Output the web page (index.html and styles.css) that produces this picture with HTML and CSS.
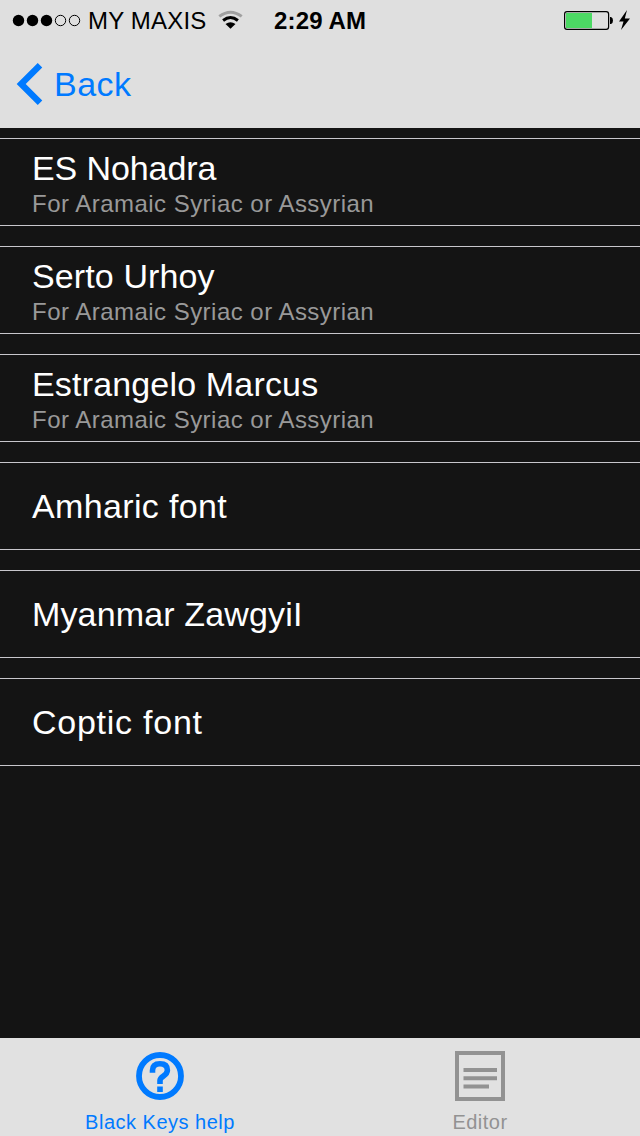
FILE: index.html
```
<!DOCTYPE html>
<html lang="en">
<head>
<meta charset="utf-8">
<title>Black Keys help</title>
<link rel="stylesheet" href="styles.css">
</head>
<body>
<div class="screen">
  <header class="header">
    <div class="status">
      <div class="carrier">
        <svg class="signal" width="70" height="14" viewBox="0 0 70 14">
          <circle cx="6.5" cy="7.5" r="5.7"/><circle cx="20.5" cy="7.5" r="5.7"/><circle cx="34.5" cy="7.5" r="5.7"/>
          <g fill="none" stroke="#000"><circle cx="48.5" cy="7.5" r="5.2"/><circle cx="62.5" cy="7.5" r="5.2"/></g>
        </svg>
        <span class="carrier-name">MY MAXIS</span>
        <svg class="wifi" width="26" height="20" viewBox="0 0 26 20">
          <path d="M1.3 6.4Q12.5 -2 23.7 6.4" fill="none" stroke="#a0a0a0" stroke-width="3"/>
          <path d="M5.1 10.5Q12.5 4.6 19.9 10.5" fill="none" stroke="#000" stroke-width="3"/>
          <path d="M7.5 14Q12.5 10.6 17.5 14L12.5 18.8Z"/>
        </svg>
      </div>
      <time class="time">2:29 AM</time>
      <svg class="battery" width="68" height="24" viewBox="0 0 68 24">
        <rect x=".6" y="3.6" width="44" height="17.8" rx="2.4" fill="none" stroke="#000" stroke-width="1.2"/>
        <rect x="2" y="5" width="26" height="15" fill="#4cd964"/>
        <path d="M46 9h1q2 .6 2 3.5t-2 3.5h-1z"/>
        <path d="M63 2L55 13.5h4.5L57 22L66 10.5h-5.2z"/>
      </svg>
    </div>
    <nav class="nav">
      <a class="back">
        <svg width="28" height="44" viewBox="0 0 28 44"><path d="M25 3.2L6.2 22L25 40.8" fill="none" stroke="#007aff" stroke-width="6.4"/></svg>
        <span class="back-label">Back</span>
      </a>
    </nav>
  </header>
  <main class="list">
    <div class="row"><div class="title t-nohadra">ES Nohadra</div><div class="subtitle">For Aramaic Syriac or Assyrian</div></div>
    <div class="row"><div class="title t-serto">Serto Urhoy</div><div class="subtitle">For Aramaic Syriac or Assyrian</div></div>
    <div class="row"><div class="title t-estrangelo">Estrangelo Marcus</div><div class="subtitle">For Aramaic Syriac or Assyrian</div></div>
    <div class="row single"><div class="title t-amharic">Amharic font</div></div>
    <div class="row single"><div class="title t-myanmar">Myanmar ZawgyiI</div></div>
    <div class="row single"><div class="title t-coptic">Coptic font</div></div>
  </main>
  <footer class="tabs">
    <a class="tab active">
      <svg width="50" height="52" viewBox="0 0 50 52">
        <circle cx="25" cy="26" r="21" fill="none" stroke="#007aff" stroke-width="5.8"/>
        <path d="M17.5 22.8V20.5Q17.500 13.800 25 13.800Q32.400 13.800 32.400 20.300C32.400 26.200 25 25.800 25 30.500V34" fill="none" stroke="#007aff" stroke-width="5.6"/>
        <rect x="22.2" y="36.5" width="5.6" height="5.5" fill="#007aff"/>
      </svg>
      <span class="tab-label">Black Keys help</span>
    </a>
    <a class="tab">
      <svg width="50" height="52" viewBox="0 0 50 52">
        <rect x="2" y="3" width="46" height="46" fill="none" stroke="#929292" stroke-width="4"/>
        <path d="M8.5 20H42M8.5 28.3H42M8.5 36.6H34" fill="none" stroke="#929292" stroke-width="4"/>
      </svg>
      <span class="tab-label editor">Editor</span>
    </a>
  </footer>
</div>
</body>
</html>
```
FILE: styles.css
```
* { box-sizing: border-box; }
body { margin: 0; font-family: "Liberation Sans", Arial, sans-serif; }
svg { display: block; flex: none; }
.screen { width: 640px; height: 1136px; display: flex; flex-direction: column; background: #141414; overflow: hidden; white-space: nowrap; }
.header { height: 128px; background: #dfdfdf; flex: none; }
.status { height: 40px; display: grid; grid-template-columns: 274px 1fr 76px; align-items: center; font-size: 24px; line-height: 28px; color: #000; }
.carrier { display: flex; align-items: center; padding-left: 12px; }
.carrier-name { width: 119px; margin-left: 6px; margin-top: 2px; letter-spacing: 0.2px; }
.wifi { margin-left: 11px; }
.time { font-weight: 700; margin-top: 2px; letter-spacing: 0.15px; }
.nav { height: 88px; display: flex; align-items: center; padding-left: 15px; }
.back { display: flex; align-items: center; color: #007aff; }
.back-label { font-size: 34px; line-height: 40px; margin-left: 11px; letter-spacing: 0.5px; }
.list { flex: 1; display: flex; flex-direction: column; gap: 20px; padding-top: 10px; }
.row { height: 88px; flex: none; padding: 9px 32px 0; border-top: 1px solid #c8c7cc; border-bottom: 1px solid #c8c7cc; }
.single { padding-top: 23px; }
.title { font-size: 34px; line-height: 40px; color: #fff; }
.t-nohadra { letter-spacing: -0.1px; }
.t-serto { letter-spacing: 0.12px; }
.t-estrangelo { letter-spacing: 0.17px; }
.t-amharic { letter-spacing: 0.35px; }
.t-myanmar { letter-spacing: 0.15px; }
.t-coptic { letter-spacing: 0.75px; }
.subtitle { font-size: 24px; line-height: 28px; color: #999; letter-spacing: 0.47px; margin-top: 2px; }
.tabs { height: 98px; flex: none; display: grid; grid-template-columns: 1fr 1fr; background: #e1e1e1; }
.tab { display: flex; flex-direction: column; align-items: center; padding-top: 12px; color: #929292; }
.active { color: #007aff; }
.tab-label { font-size: 20px; line-height: 24px; margin-top: 8px; letter-spacing: 0.5px; }
```
